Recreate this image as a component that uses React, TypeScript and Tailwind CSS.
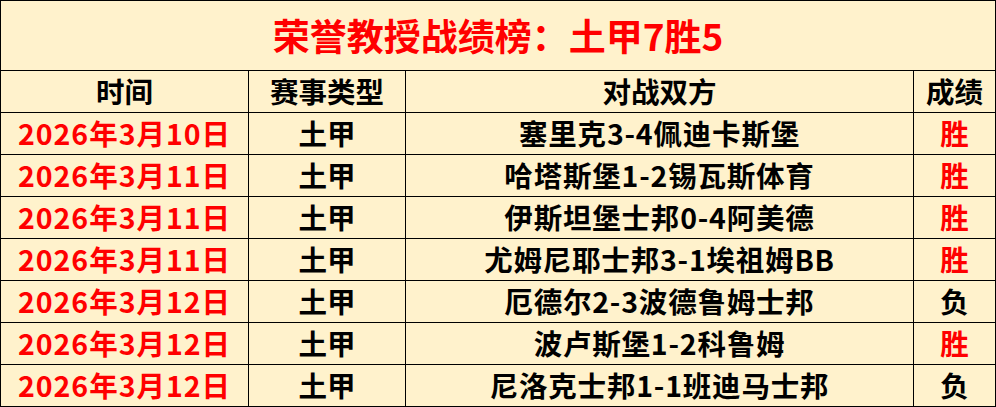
import React from "react";

const rows: [string, string, string, string][] = [
  ["2026年3月10日", "土甲", "塞里克3-4佩迪卡斯堡", "胜"],
  ["2026年3月11日", "土甲", "哈塔斯堡1-2锡瓦斯体育", "胜"],
  ["2026年3月11日", "土甲", "伊斯坦堡士邦0-4阿美德", "胜"],
  ["2026年3月11日", "土甲", "尤姆尼耶士邦3-1埃祖姆BB", "胜"],
  ["2026年3月12日", "土甲", "厄德尔2-3波德鲁姆士邦", "负"],
  ["2026年3月12日", "土甲", "波卢斯堡1-2科鲁姆", "胜"],
  ["2026年3月12日", "土甲", "尼洛克士邦1-1班迪马士邦", "负"],
];

const font = { fontFamily: '"Noto Sans CJK SC", "Microsoft YaHei", sans-serif' };

export default function App() {
  return (
    <div
      className="w-[996px] h-[407px] box-border border border-black bg-[#FFF2CC] flex flex-col font-bold text-black"
      style={font}
    >
      <div className="h-[70px] shrink-0 border-b border-black flex items-center justify-center text-[37px] leading-none text-[#FF0000]">
        荣誉教授战绩榜：土甲7胜5
      </div>
      <div className="grid grid-cols-[248px_157px_508px_81px] h-[42px] shrink-0 border-b border-black text-[28.5px] leading-none">
        <div className="border-r border-black flex items-center justify-center">时间</div>
        <div className="border-r border-black flex items-center justify-center">赛事类型</div>
        <div className="border-r border-black flex items-center justify-center">对战双方</div>
        <div className="flex items-center justify-center">成绩</div>
      </div>
      {rows.map((r, i) => (
        <div
          key={i}
          className={
            "grid grid-cols-[248px_157px_508px_81px] shrink-0 text-[28.5px] leading-none " +
            (i === rows.length - 1 ? "h-[41px]" : "h-[42px] border-b border-black")
          }
        >
          <div className="border-r border-black flex items-center justify-center text-[#FF0000] tracking-[1px]">{r[0]}</div>
          <div className="border-r border-black flex items-center justify-center">{r[1]}</div>
          <div className="border-r border-black flex items-center justify-center tracking-[0.8px]">{r[2]}</div>
          <div className={"flex items-center justify-center " + (r[3] === "胜" ? "text-[#FF0000]" : "text-black")}>{r[3]}</div>
        </div>
      ))}
    </div>
  );
}
